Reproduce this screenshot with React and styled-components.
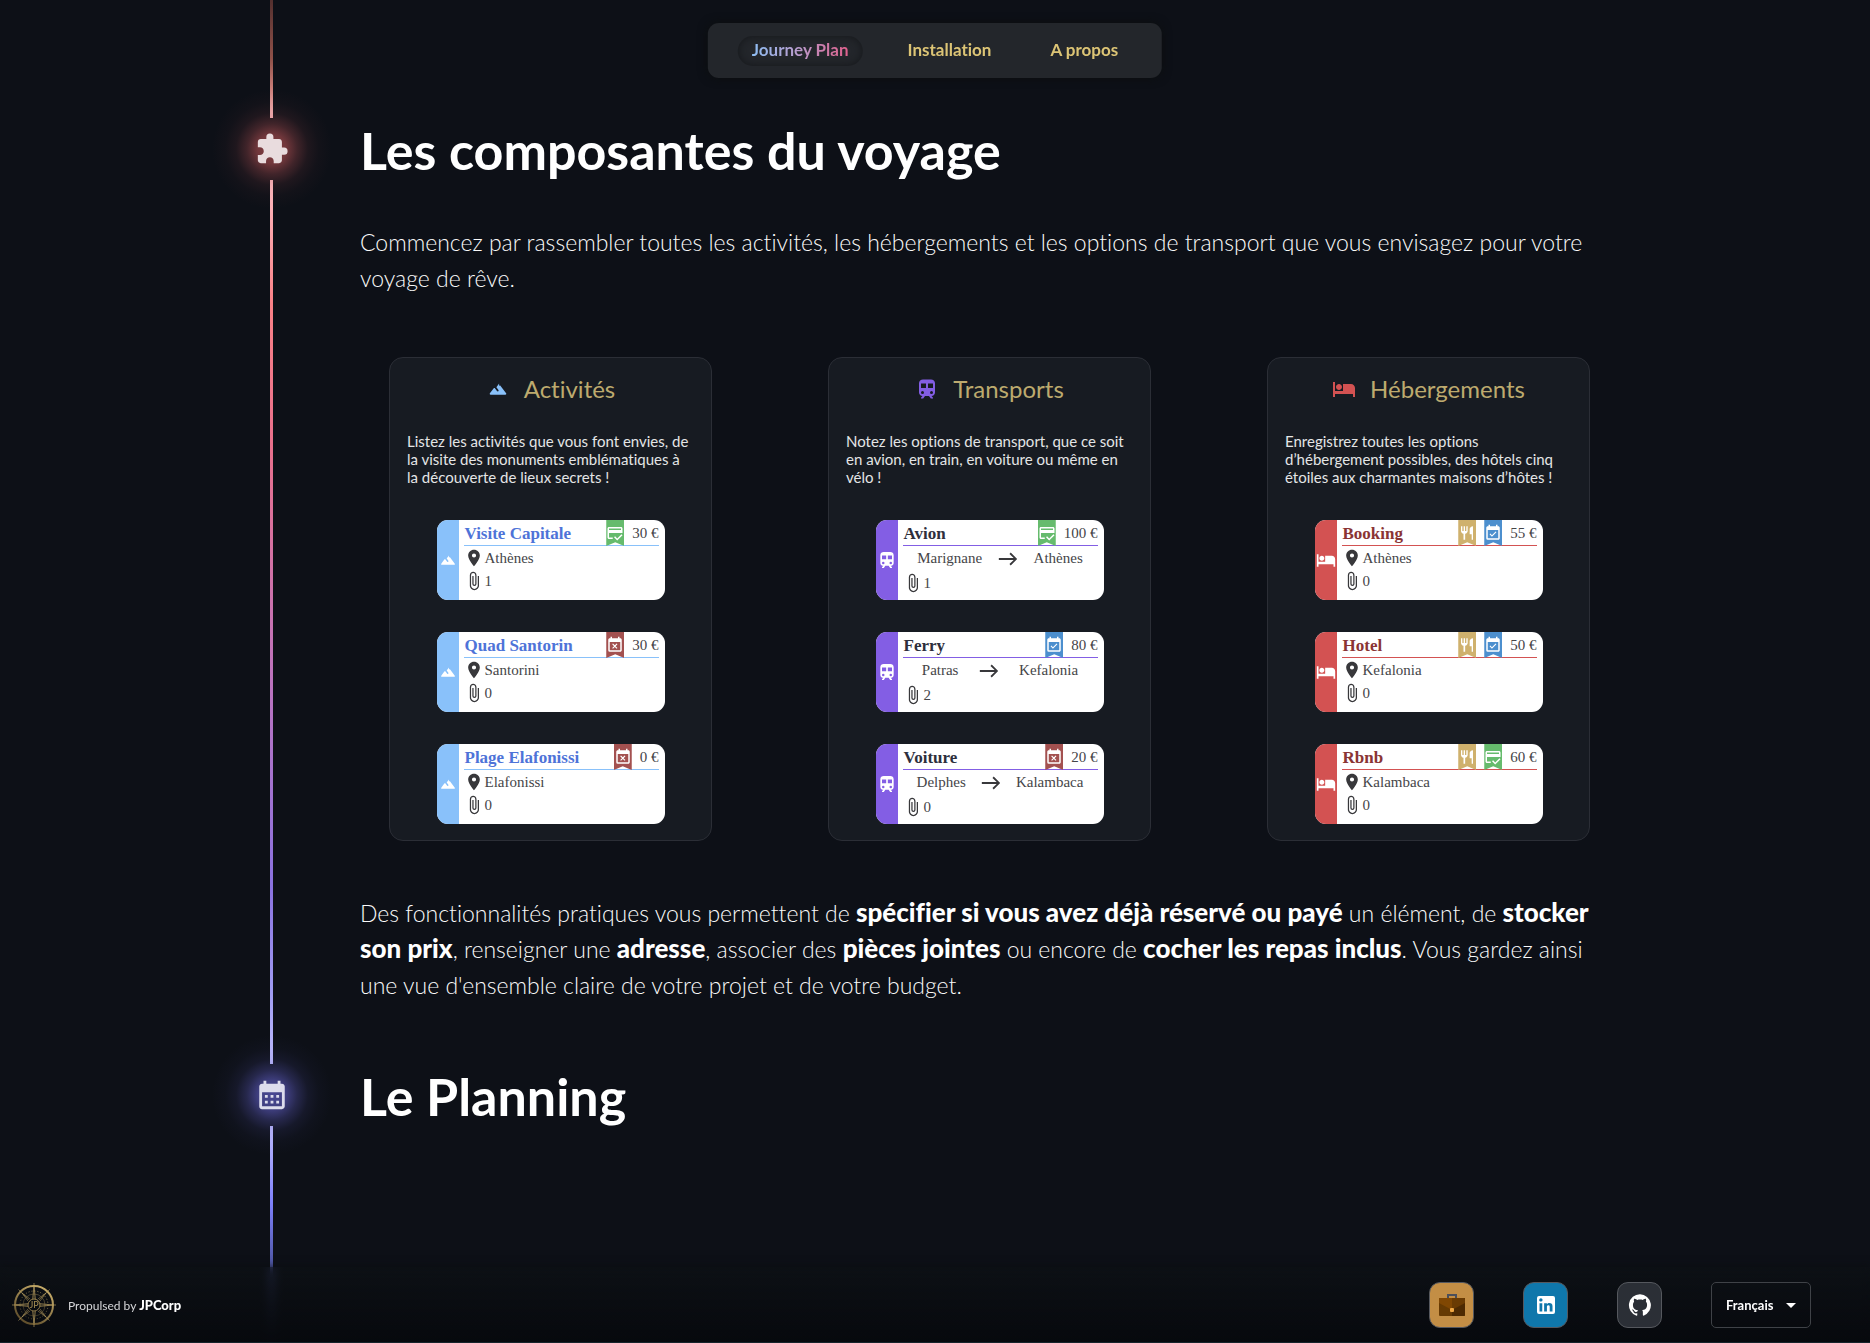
import React from "react";
import styled, { createGlobalStyle } from "styled-components";
import {
  MdArrowDropDown,
  MdAttachFile,
  MdCalendarMonth,
  MdCreditScore,
  MdEast,
  MdEventAvailable,
  MdEventBusy,
  MdExtension,
  MdHotel,
  MdPlace,
} from "react-icons/md";

const sans = `Lato, "Open Sans", sans-serif`;
const serif = `"Liberation Serif", "Times New Roman", serif`;

const GlobalStyle = createGlobalStyle`
  *, *::before, *::after { box-sizing: border-box; }
  body {
    margin: 0;
    background: #0d1017;
    color: #fff;
    font-family: ${sans};
    font-variant-ligatures: no-common-ligatures;
  }
  h1, h2, h3, p { margin: 0; }
  svg { display: block; flex: none; }
`;

const Page = styled.div`
  display: flex;
  flex-direction: column;
  min-height: 100vh;
`;

/* ---------- top navigation ---------- */

const Nav = styled.nav`
  position: fixed;
  z-index: 2;
  top: 23px;
  left: 50%;
  transform: translateX(-50%);
  display: flex;
  align-items: center;
  gap: 31px;
  height: 55px;
  padding: 0 30px;
  border-radius: 11px;
  background: #23262b;
  box-shadow: 0 0 10px rgba(12, 14, 14, 0.9);
`;

const NavLink = styled.a`
  display: flex;
  align-items: center;
  height: 30px;
  padding: 0 14px 3px;
  border-radius: 15px;
  color: #dcc475;
  font-size: 17px;
  font-weight: 700;
  white-space: nowrap;
  text-decoration: none;
  box-shadow: ${(p) => (p.$active ? "inset 0 0 9px #15171a" : "none")};
`;

const GradientText = styled.span`
  background: linear-gradient(90deg, #8dbdf3, #b79ed0 45%, #e0608c);
  background-clip: text;
  color: transparent;
`;

/* ---------- timeline ---------- */

const Main = styled.main`
  display: flex;
  flex: 1;
  flex-direction: column;
  width: 100%;
  max-width: 1368px;
  margin: 0 auto;
`;

const Lead = styled.div`
  display: flex;
  justify-content: center;
  width: 41px;
  height: 118px;
`;

const Section = styled.section`
  display: flex;
  gap: 68px;
  flex: ${(p) => (p.$grow ? 1 : "none")};
  min-height: 279px;
`;

const Rail = styled.div`
  display: flex;
  flex-direction: column;
  align-items: center;
  flex: none;
  width: 41px;
`;

const Line = styled.div`
  flex: 1;
  width: 3px;
  max-width: 3px;
  background: linear-gradient(180deg, ${(p) => p.$stops});
`;

const Marker = styled.div`
  display: flex;
  align-items: center;
  justify-content: center;
  width: 41px;
  height: 62px;
  color: ${(p) => p.$color};

  svg {
    z-index: 1;
  }

  &::before {
    content: "";
    position: absolute;
    width: 120px;
    height: 120px;
    border-radius: 50%;
    background: radial-gradient(
      closest-side,
      rgba(${(p) => p.$glow}, 0.8) 0%,
      rgba(${(p) => p.$glow}, 0.66) 24%,
      rgba(${(p) => p.$glow}, 0.34) 42%,
      rgba(${(p) => p.$glow}, 0.12) 60%,
      rgba(${(p) => p.$glow}, 0.04) 78%,
      rgba(${(p) => p.$glow}, 0) 100%
    );
  }
`;

const Content = styled.div`
  flex: 1;
  min-width: 0;
  padding-bottom: 61px;
`;

const Heading = styled.h2`
  font-size: 52px;
  font-weight: 700;
  line-height: 64px;
`;

const Text = styled.p`
  margin-top: ${(p) => p.$top}px;
  padding-right: 8px;
  font-size: 23px;
  font-weight: 300;
  line-height: 36px;
  color: #fafafa;

  strong {
    font-size: 26px;
    font-weight: 900;
    line-height: 24px;
    color: #fff;
  }
`;

/* ---------- component cards ---------- */

const Cards = styled.div`
  display: flex;
  justify-content: space-between;
  gap: 24px;
  margin-top: 61px;
  padding: 0 29px;
`;

const Card = styled.article`
  display: flex;
  flex-direction: column;
  align-items: center;
  flex: 0 1 323px;
  padding: 16px 17px;
  border: 1px solid #2b2e36;
  border-radius: 14px;
  background: #171b22;
`;

const CardTitle = styled.h3`
  display: flex;
  align-items: center;
  gap: 14px;
  color: #bdaa6e;
  font-size: 24px;
  font-weight: 400;
  line-height: 30px;

  svg {
    color: ${(p) => p.$color};
  }
`;

const CardText = styled.p`
  align-self: stretch;
  margin-top: 28px;
  font-size: 15px;
  line-height: 18px;
  color: #e4e5e6;
`;

const List = styled.div`
  display: flex;
  flex-direction: column;
  gap: 32px;
  margin-top: 34px;
`;

const Item = styled.div`
  display: flex;
  width: 228px;
  height: 80px;
  overflow: hidden;
  border-radius: 11px;
  background: #fff;
  color: #454548;
  font-family: ${serif};
  font-size: 15px;
`;

const Strip = styled.div`
  display: flex;
  align-items: center;
  justify-content: center;
  flex: none;
  width: 22px;
  background: ${(p) => p.$color};
  color: #fff;
`;

const ItemBody = styled.div`
  flex: 1;
  min-width: 0;
  padding: 0 6px 0 5px;
`;

const ItemHead = styled.div`
  display: flex;
  align-items: center;
  gap: 8px;
  height: 26px;
  border-bottom: 1px solid ${(p) => p.$color};
`;

const ItemName = styled.span`
  flex: 1;
  padding: 2px 0 0 1px;
  color: ${(p) => p.$color};
  font-size: 17px;
  font-weight: 700;
  white-space: nowrap;
`;

const Price = styled.span`
  padding-top: 1px;
  white-space: nowrap;
`;

const Ribbon = styled.span`
  display: flex;
  align-items: center;
  justify-content: center;
  width: 18px;
  height: 26px;
  margin-bottom: -1px;
  background: ${(p) => p.$color};
  color: #fff;
  clip-path: polygon(0 0, 100% 0, 100% 100%, 50% 86%, 0 100%);
`;

const Row = styled.div`
  display: flex;
  align-items: center;
  gap: 1px;
  height: 23px;

  span {
    padding-top: 1px;
  }

  svg {
    color: #38383b;
  }
`;

const Route = styled.div`
  display: flex;
  align-items: center;
  justify-content: space-evenly;
  height: 25px;

  svg {
    color: #38383b;
  }
`;

/* ---------- footer ---------- */

const Footer = styled.footer`
  position: fixed;
  z-index: 2;
  right: 0;
  bottom: 0;
  left: 0;
  display: flex;
  align-items: center;
  justify-content: space-between;
  height: 76px;
  padding: 0 59px 0 12px;
  border-bottom: 1px solid #16242c;
  background: linear-gradient(180deg, rgba(13, 17, 20, 0.5), rgba(7, 9, 13, 0.95));
  backdrop-filter: blur(5px);
  box-shadow: 0 0 8px rgba(10, 12, 14, 0.8);
`;

const Brand = styled.div`
  display: flex;
  align-items: center;
  gap: 12px;
  font-size: 12px;
  color: #d6d7d9;

  strong {
    font-size: 13px;
    font-weight: 900;
    color: #fff;
  }
`;

const Actions = styled.div`
  display: flex;
  align-items: center;
  gap: 49px;
`;

const IconLink = styled.a`
  display: flex;
  align-items: center;
  justify-content: center;
  width: 45px;
  height: 46px;
  border: 1px solid #55585e;
  border-radius: 11px;
  background: ${(p) => p.$color};
  color: #fff;
`;

const LanguageBox = styled.div`
  position: relative;
  display: flex;
  align-items: center;

  svg {
    position: absolute;
    right: 8px;
    pointer-events: none;
  }
`;

const Language = styled.select`
  appearance: none;
  width: 100px;
  height: 46px;
  padding: 0 32px 0 14px;
  border: 1px solid #3f4247;
  border-radius: 5px;
  background: transparent;
  color: #fff;
  font-family: ${sans};
  font-size: 13px;
  font-weight: 700;
`;

/* ---------- drawings ---------- */

const MountainIcon = ({ size }) => (
  <svg width={size} height={size} viewBox="-1 -1 26 26" fill="currentColor" aria-hidden="true">
    <path d="m13.2 7.07-2.95 3.93 2.25 3c.33.44.24 1.07-.2 1.4-.44.33-1.07.25-1.4-.2l-2.1-2.8c-.4-.53-1.2-.53-1.6 0l-4 5.33c-.49.67-.02 1.6.8 1.6h16c.82 0 1.29-.93.8-1.6l-6-8c-.4-.53-1.2-.53-1.6 0z" transform="translate(0 -1)" />
  </svg>
);

const TrainIcon = ({ size }) => (
  <svg width={size} height={size} viewBox="0 0 24 24" fill="currentColor" aria-hidden="true">
    <path
      fillRule="evenodd"
      d="M8 2.5C5.8 2.5 4 4 4 6.2v9.3C4 17.4 5.6 19 7.5 19L6 20.8v.7h2.2L10 19h4l1.8 2.5H18v-.7L16.5 19c1.9 0 3.5-1.6 3.5-3.5V6.2C20 4 18.2 2.5 16 2.5zM6 6.500h5V11H6zM13 6.5h5V11h-5zM7.5 14a1.5 1.5 0 1 1 0 3 1.5 1.5 0 0 1 0-3zM16.5 14a1.5 1.5 0 1 1 0 3 1.5 1.5 0 0 1 0-3z"
    />
  </svg>
);

const ForkIcon = ({ size }) => (
  <svg width={size} height={size} viewBox="0 0 24 24" fill="currentColor" aria-hidden="true">
    <path d="M16 6v8h3v8h2V2c-2.76 0-5 2.24-5 4zm-5 3H9V2H7v7H5V2H3v7c0 2.12 1.66 3.84 3.75 3.97V22h2.5v-9.03C11.34 12.84 13 11.12 13 9V2h-2v7z" />
  </svg>
);

const LinkedInIcon = () => (
  <svg width="24" height="24" viewBox="0 0 24 24" fill="currentColor" aria-hidden="true">
    <path d="M19 3a2 2 0 0 1 2 2v14a2 2 0 0 1-2 2H5a2 2 0 0 1-2-2V5a2 2 0 0 1 2-2h14m-.5 15.5v-5.3a3.26 3.26 0 0 0-3.26-3.26c-.85 0-1.84.52-2.32 1.3v-1.11h-2.79v8.37h2.79v-4.93c0-.77.62-1.4 1.39-1.4a1.4 1.4 0 0 1 1.4 1.4v4.93h2.79M6.88 8.56a1.68 1.68 0 0 0 1.68-1.68c0-.93-.75-1.69-1.68-1.69a1.69 1.69 0 0 0-1.69 1.69c0 .93.76 1.68 1.69 1.68m1.39 9.94v-8.37H5.5v8.37h2.77z" />
  </svg>
);

const GitHubIcon = () => (
  <svg width="24" height="24" viewBox="0 0 24 24" fill="currentColor" aria-hidden="true">
    <path d="M12 1.27a11 11 0 00-3.48 21.46c.55.09.73-.28.73-.55v-1.84c-3.03.64-3.67-1.46-3.67-1.46-.55-1.29-1.28-1.65-1.28-1.65-.92-.65.1-.65.1-.65 1.1 0 1.73 1.1 1.73 1.1.92 1.65 2.57 1.2 3.21.92a2 2 0 01.64-1.47c-2.47-.27-5.04-1.19-5.04-5.5 0-1.1.46-2.1 1.2-2.84a3.76 3.76 0 010-2.93s.91-.28 3.11 1.1c1.8-.49 3.7-.49 5.5 0 2.1-1.38 3.02-1.1 3.02-1.1a3.76 3.76 0 01.1 2.83c.74.74 1.2 1.74 1.2 2.94 0 4.21-2.57 5.13-5.04 5.4.45.37.82.92.82 2.02v3.03c0 .27.1.64.73.55A11 11 0 0012 1.27" />
  </svg>
);

const BriefcaseIcon = () => (
  <svg width="28" height="24" viewBox="0 0 28 24" aria-hidden="true">
    <path d="M10 5V2h8v3" fill="none" stroke="#4b4f5b" strokeWidth="2" />
    <rect x="1" y="5" width="26" height="18" rx="1" fill="#663a03" />
    <path d="M14 5h12a1 1 0 0 1 1 1v16a1 1 0 0 1-1 1H14z" fill="#4d2a02" />
    <path d="M1 6a1 1 0 0 1 1-1h12v12L1 10z" fill="#804703" />
    <path d="M14 5h12a1 1 0 0 1 1 1v4l-13 7z" fill="#6a3b03" />
    <rect x="12" y="15" width="4" height="4" rx="1" fill="#f0a743" />
  </svg>
);

const CompassLogo = () => (
  <svg width="44" height="44" viewBox="0 0 44 44" fill="none" stroke="url(#brass)" aria-hidden="true">
    <defs>
      <linearGradient id="brass" x1="34" y1="4" x2="12" y2="40" gradientUnits="userSpaceOnUse">
        <stop offset="0" stopColor="#c9ae6b" />
        <stop offset="1" stopColor="#5d4c2a" />
      </linearGradient>
    </defs>
    <circle cx="22" cy="22" r="19" strokeWidth="2" />
    <circle cx="22" cy="22" r="14" strokeWidth="1" strokeDasharray="1 2" opacity="0.8" />
    <circle cx="22" cy="22" r="11" strokeWidth="1" opacity="0.4" />
    <circle cx="22" cy="22" r="6" strokeWidth="1" />
    {[0, 90, 180, 270].map((a) => (
      <path key={a} d="M22.01 0L22 16M20.5 16l1.5-12 1.5 12" strokeWidth="0.8" opacity="0.8" transform={`rotate(${a} 22 22)`} />
    ))}
    {[45, 135, 225, 315].map((a) => (
      <path key={a} d="M22.01 0L22 15M20.5 15l1.5-10 1.5 10" strokeWidth="0.8" opacity="0.65" transform={`rotate(${a} 22 22)`} />
    ))}
    <text x="22" y="25" textAnchor="middle" fontSize="9" fontFamily="Lato, sans-serif" fill="#a78e54" stroke="none">
      JP
    </text>
  </svg>
);

/* ---------- data ---------- */

const ribbons = {
  paid: { color: "#66bb6d", Icon: MdCreditScore, label: "Payé" },
  booked: { color: "#4c8fce", Icon: MdEventAvailable, label: "Réservé" },
  none: { color: "#a35150", Icon: MdEventBusy, label: "Non réservé" },
  meals: { color: "#cfb16d", Icon: ForkIcon, label: "Repas" },
};

const categories = [
  {
    title: "Activités",
    Icon: MountainIcon,
    color: "#89c1fa",
    nameColor: "#4e73d8",
    text: "Listez les activités que vous font envies, de la visite des monuments emblématiques à la découverte de lieux secrets !",
    items: [
      { name: "Visite Capitale", tags: ["paid"], price: 30, place: "Athènes", files: 1 },
      { name: "Quad Santorin", tags: ["none"], price: 30, place: "Santorini", files: 0 },
      { name: "Plage Elafonissi", tags: ["none"], price: 0, place: "Elafonissi", files: 0 },
    ],
  },
  {
    title: "Transports",
    Icon: TrainIcon,
    color: "#835ee4",
    nameColor: "#2e2f3c",
    text: "Notez les options de transport, que ce soit en avion, en train, en voiture ou même en vélo !",
    items: [
      { name: "Avion", tags: ["paid"], price: 100, route: ["Marignane", "Athènes"], files: 1 },
      { name: "Ferry", tags: ["booked"], price: 80, route: ["Patras", "Kefalonia"], files: 2 },
      { name: "Voiture", tags: ["none"], price: 20, route: ["Delphes", "Kalambaca"], files: 0 },
    ],
  },
  {
    title: "Hébergements",
    Icon: MdHotel,
    color: "#d35252",
    nameColor: "#8a3434",
    text: "Enregistrez toutes les options d’hébergement possibles, des hôtels cinq étoiles aux charmantes maisons d’hôtes !",
    items: [
      { name: "Booking", tags: ["meals", "booked"], price: 55, place: "Athènes", files: 0 },
      { name: "Hotel", tags: ["meals", "booked"], price: 50, place: "Kefalonia", files: 0 },
      { name: "Rbnb", tags: ["meals", "paid"], price: 60, place: "Kalambaca", files: 0 },
    ],
  },
];

function TravelItem({ item, category }) {
  return (
    <Item>
      <Strip $color={category.color}>
        <category.Icon size={20} />
      </Strip>
      <ItemBody>
        <ItemHead $color={category.color}>
          <ItemName $color={category.nameColor}>{item.name}</ItemName>
          {item.tags.map((tag) => {
            const { Icon, color, label } = ribbons[tag];
            return (
              <Ribbon key={tag} $color={color} role="img" aria-label={label}>
                <Icon size={tag === "meals" ? 16 : 18} />
              </Ribbon>
            );
          })}
          <Price>{item.price} €</Price>
        </ItemHead>
        {item.route ? (
          <Route>
            <span>{item.route[0]}</span>
            <MdEast size={22} />
            <span>{item.route[1]}</span>
          </Route>
        ) : (
          <Row>
            <MdPlace size={20} />
            <span>{item.place}</span>
          </Row>
        )}
        <Row>
          <MdAttachFile size={20} />
          <span>{item.files}</span>
        </Row>
      </ItemBody>
    </Item>
  );
}

export default function App() {
  return (
    <Page>
      <GlobalStyle />
      <Nav>
        <NavLink href="#journey" $active>
          <GradientText>Journey Plan</GradientText>
        </NavLink>
        <NavLink href="#installation">Installation</NavLink>
        <NavLink href="#about">A propos</NavLink>
      </Nav>

      <Main>
        <Lead>
          <Line $stops="#54302f, #8f5149 50%, #c97d78 75%, #fbb9bd" />
        </Lead>

        <Section>
          <Rail>
            <Marker $color="#e9dcde" $glow="165, 75, 78">
              <MdExtension size={34} />
            </Marker>
            <Line $stops="#fdbcc2, #f98187 14%, #e8708c 30%, #b973c0 58%, #8a72e0 80%, #a09cf2 92%, #c0bdfd" />
          </Rail>
          <Content>
            <Heading>Les composantes du voyage</Heading>
            <Text $top={42}>
              Commencez par rassembler toutes les activités, les hébergements et les options de
              transport que vous envisagez pour votre voyage de rêve.
            </Text>
            <Cards>
              {categories.map((category) => (
                <Card key={category.title}>
                  <CardTitle $color={category.color}>
                    <category.Icon size={24} />
                    {category.title}
                  </CardTitle>
                  <CardText>{category.text}</CardText>
                  <List>
                    {category.items.map((item) => (
                      <TravelItem key={item.name} item={item} category={category} />
                    ))}
                  </List>
                </Card>
              ))}
            </Cards>
            <Text $top={54}>
              Des fonctionnalités pratiques vous permettent de{" "}
              <strong>spécifier si vous avez déjà réservé ou payé</strong> un élément, de{" "}
              <strong>stocker son prix</strong>, renseigner une <strong>adresse</strong>, associer
              des <strong>pièces jointes</strong> ou encore de{" "}
              <strong>cocher les repas inclus</strong>. Vous gardez ainsi une vue d'ensemble claire
              de votre projet et de votre budget.
            </Text>
          </Content>
        </Section>

        <Section $grow>
          <Rail>
            <Marker $color="#dcdcec" $glow="88, 86, 180">
              <MdCalendarMonth size={34} />
            </Marker>
            <Line $stops="#c0bdfd, #7d80fb 36%, #4b539c 66%, #1b2140" />
          </Rail>
          <Content>
            <Heading>Le Planning</Heading>
          </Content>
        </Section>
      </Main>

      <Footer>
        <Brand>
          <CompassLogo />
          <span>
            Propulsed by <strong>JPCorp</strong>
          </span>
        </Brand>
        <Actions>
          <IconLink href="#portfolio" $color="#c38e45" aria-label="Portfolio">
            <BriefcaseIcon />
          </IconLink>
          <IconLink href="#linkedin" $color="#0f77ab" aria-label="LinkedIn">
            <LinkedInIcon />
          </IconLink>
          <IconLink href="#github" $color="#2b2f36" aria-label="GitHub">
            <GitHubIcon />
          </IconLink>
          <LanguageBox>
            <Language aria-label="Langue" defaultValue="fr">
              <option value="fr">Français</option>
              <option value="en">English</option>
            </Language>
            <MdArrowDropDown size={24} />
          </LanguageBox>
        </Actions>
      </Footer>
    </Page>
  );
}
